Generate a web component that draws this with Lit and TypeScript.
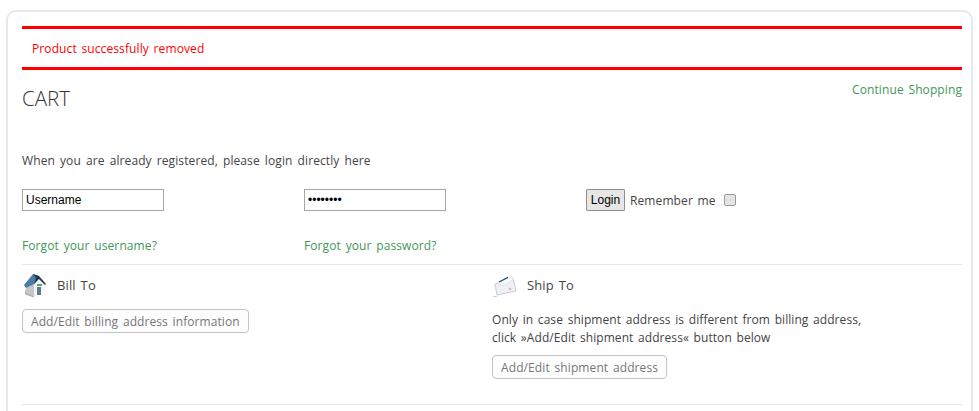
import { LitElement, html, css } from "lit";
import { customElement } from "lit/decorators.js";

@customElement("app-root")
export class AppRoot extends LitElement {
  static styles = css`
    :host { display: block; height: 411px; overflow: hidden; background: #fff; font-family: "Open Sans", sans-serif; font-size: 12px; color: #444; letter-spacing: 0.1px; word-spacing: 1.5px; }
    .card { box-sizing: border-box; margin: 10px 6px 0; width: 967px; height: 500px; border: 2px solid #e8e8e8; border-radius: 10px; padding: 14px 9px 0 14px; }
    .msg { border-top: 3px solid #f00; border-bottom: 3px solid #f00; height: 38px; padding-left: 10px; display: flex; align-items: center; color: #f00; }
    .head { display: flex; justify-content: space-between; height: 82px; }
    h1 { margin: 16px 0 0; font-size: 20.5px; font-weight: 300; line-height: 24px; letter-spacing: 0; word-spacing: 0; color: #333; }
    a { color: #44965a; text-decoration: none; }
    .cont { margin-top: 11px; line-height: 18px; }
    .intro { line-height: 18px; height: 37px; word-spacing: 1.85px; }
    .login { display: grid; grid-template-columns: 282px 282px 1fr; height: 22px; }
    input[type=text], input[type=password] { box-sizing: border-box; width: 142px; height: 22px; border: 1px solid #a6a6a6; padding: 0 3px; margin: 0; font: 12px "Liberation Sans", sans-serif; color: #000; letter-spacing: 0; word-spacing: 0; outline: 0; }
    .rem { display: flex; align-items: center; gap: 5px; }
    .lbtn { box-sizing: border-box; width: 39px; height: 22px; padding: 0; border: 1px solid #8f8f8f; border-radius: 1px; background: #e6e6e6; font: 12px "Liberation Sans", sans-serif; color: #000; letter-spacing: 0; word-spacing: 0; }
    .check { box-sizing: border-box; width: 12px; height: 12px; margin-left: 3px; border: 1px solid #9a9a9a; border-radius: 2px; background: #e4e4e4; }
    .forgot { display: grid; grid-template-columns: 282px 1fr; margin-top: 26px; line-height: 18px; padding-bottom: 9px; border-bottom: 1px solid #e6e6e6; }
    .addr { display: grid; grid-template-columns: 470px 1fr; height: 139px; border-bottom: 1px solid #e6e6e6; }
    .title { display: flex; align-items: center; gap: 9px; height: 28px; margin-top: 6px; font-size: 13px; }
    .title svg { display: block; flex: none; }
    .btn { box-sizing: border-box; display: inline-flex; align-items: center; height: 24px; padding: 0 8px; border: 1px solid #c4c4c4; border-radius: 4px; background: #fdfdfd; color: #777; font: inherit; }
    .bill .btn { margin-top: 10px; letter-spacing: 0.08px; }
    .ship p { margin: 12px 0 0; line-height: 18px; letter-spacing: 0.06px; }
    .ship .btn { margin-top: 8px; }
  `;

  render() {
    return html`
      <div class="card">
        <div class="msg">Product successfully removed</div>
        <div class="head">
          <h1>CART</h1>
          <a class="cont" href="#">Continue Shopping</a>
        </div>
        <div class="intro">When you are already registered, please login directly here</div>
        <div class="login">
          <input type="text" .value=${"Username"} />
          <input type="password" .value=${"password"} />
          <div class="rem">
            <button class="lbtn">Login</button>
            <span>Remember me</span>
            <span class="check"></span>
          </div>
        </div>
        <div class="forgot">
          <a href="#">Forgot your username?</a>
          <a href="#">Forgot your password?</a>
        </div>
        <div class="addr">
          <div class="bill">
            <div class="title">
              <svg width="26" height="26" viewBox="0 0 26 26">
                <path d="M3 19l9 5 2-1V10L6 11z" fill="#c4c8cc"/>
                <path d="M12 24l11-6v-7l-5-5-6 7z" fill="#f4f5f6"/>
                <path d="M2 13L11 2l6 2-5 8-8 4z" fill="#4d7ba8"/>
                <path d="M11 2l6 2 7 8-1 1-6-6-5 5 2-6z" fill="#24384c"/>
                <rect x="15" y="15" width="4" height="8" fill="#5b7c94"/>
                <rect x="15" y="12" width="5" height="2" fill="#5ba56a"/>
                <path d="M3 19l9 5v1.500l-9-3z" fill="#b5b5b5"/>
              </svg>
              <span>Bill To</span>
            </div>
            <span class="btn">Add/Edit billing address information</span>
          </div>
          <div class="ship">
            <div class="title">
              <svg width="26" height="26" viewBox="0 0 26 26">
                <path d="M3 12L21 6l3 13-19 4z" fill="#eef0f3" stroke="#c9ccd2"/>
                <path d="M5 11l13-7 4 3-10 7z" fill="#f7f8f9" stroke="#d6d9de" stroke-width=".6"/>
                <path d="M7 10l9-4.600" stroke="#31507c" stroke-width="1.300" fill="none"/>
                <circle cx="18" cy="17" r="1.300" fill="#e5b5b5"/>
                <path d="M1 24h4v1H1z" fill="#ccc"/>
              </svg>
              <span>Ship To</span>
            </div>
            <p>Only in case shipment address is different from billing address,<br />click »Add/Edit shipment address« button below</p>
            <span class="btn">Add/Edit shipment address</span>
          </div>
        </div>
      </div>
    `;
  }
}
